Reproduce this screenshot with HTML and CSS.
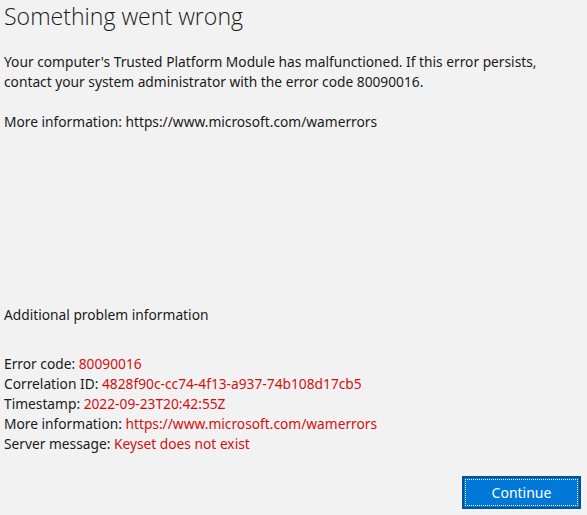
FILE: index.html
```html
<!DOCTYPE html>
<html>
<head>
<meta charset="utf-8">
<link rel="stylesheet" href="styles.css">
</head>
<body>
<div class="page">
  <h1 class="title">Something went wrong</h1>
  <p class="msg">Your computer's Trusted Platform Module has malfunctioned. If this error persists, contact your system administrator with the error code 80090016.</p>
  <p class="msg">More information: https://www.microsoft.com/wamerrors</p>
  <div class="spacer"></div>
  <p class="sub">Additional problem information</p>
  <div class="details">
    <div>Error code: <span class="red">80090016</span></div>
    <div>Correlation ID: <span class="red">4828f90c-cc74-4f13-a937-74b108d17cb5</span></div>
    <div>Timestamp: <span class="red">2022-09-23T20:42:55Z</span></div>
    <div>More information: <span class="red">https://www.microsoft.com/wamerrors</span></div>
    <div>Server message: <span class="red">Keyset does not exist</span></div>
  </div>
  <div class="actions">
    <button class="btn"><span class="focus">Continue</span></button>
  </div>
</div>
</body>
</html>
```
FILE: styles.css
```css
html, body {
  margin: 0;
  padding: 0;
  background: #f2f2f2;
}
body {
  width: 587px;
  height: 515px;
  overflow: hidden;
  font-family: "Noto Sans", "Open Sans", sans-serif;
  color: #1a1a1a;
}
.page {
  padding: 0 4px;
  display: flex;
  flex-direction: column;
  height: 515px;
  box-sizing: border-box;
}
.title {
  margin: 0;
  font-weight: 300;
  font-size: 23.1px;
  line-height: 32px;
  color: #1a1a1a;
  font-family: "Open Sans", "Noto Sans", sans-serif;
}
.msg {
  margin: 20px 0 0;
  font-size: 13.75px;
  line-height: 20px;
}
.spacer {
  height: 173px;
}
.sub {
  margin: 0;
  font-size: 13.75px;
  line-height: 20px;
}
.details {
  margin-top: 29px;
  font-size: 13.75px;
  line-height: 20px;
}
.red {
  color: #d40f0f;
}
.actions {
  display: flex;
  justify-content: flex-end;
  margin-top: 22px;
  padding-right: 2px;
}
.btn {
  width: 119px;
  height: 33px;
  background: #0078d7;
  border: 2px solid #00549c;
  padding: 1px;
  margin: 0;
  font-family: inherit;
  color: #fff;
  font-size: 14px;
  cursor: pointer;
}
.focus {
  display: flex;
  align-items: center;
  justify-content: center;
  height: 100%;
  border: 1px dotted #fff;
  box-sizing: border-box;
}
```
